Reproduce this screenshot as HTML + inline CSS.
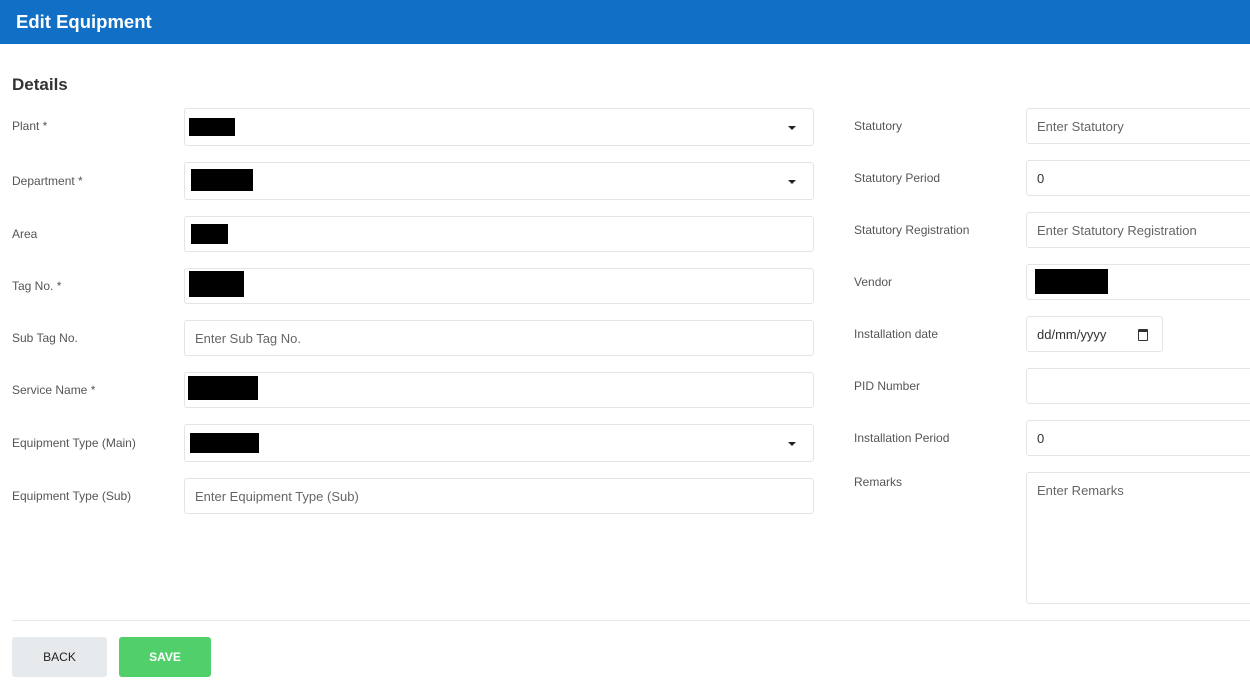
<!DOCTYPE html>
<html><head><style>
body{margin:0;width:1250px;height:693px;overflow:hidden;background:#fff;font-family:"Liberation Sans",sans-serif;position:relative}
.hd{position:absolute;left:0;top:0;width:1250px;height:44px;background:#1170c6;color:#fff;font-size:18.5px;font-weight:bold;line-height:44px;padding-left:16px;box-sizing:border-box}
.l{position:absolute;font-size:12px;color:#555}
.i{position:absolute;border:1px solid #e2e4e6;border-radius:3px;box-sizing:border-box;font-size:13px;color:#666;padding-left:10px;display:flex;align-items:center}
.b{position:absolute;background:#000}
.c{position:absolute;width:0;height:0;border-left:4px solid transparent;border-right:4px solid transparent;border-top:4px solid #222}
</style></head><body>
<div class="hd">Edit Equipment</div>
<div style="position:absolute;left:12px;top:75px;font-size:17px;font-weight:bold;color:#333">Details</div>

<div class="l" style="left:12px;top:119px">Plant *</div>
<div class="i" style="left:184px;top:108px;width:630px;height:38px"></div>
<div class="b" style="left:189px;top:118px;width:46px;height:18px"></div><div class="c" style="left:788px;top:126px"></div>

<div class="l" style="left:12px;top:174px">Department *</div>
<div class="i" style="left:184px;top:162px;width:630px;height:38px"></div>
<div class="b" style="left:191px;top:169px;width:62px;height:22px"></div><div class="c" style="left:788px;top:180px"></div>

<div class="l" style="left:12px;top:227px">Area</div>
<div class="i" style="left:184px;top:216px;width:630px;height:36px"></div>
<div class="b" style="left:191px;top:224px;width:37px;height:20px"></div>

<div class="l" style="left:12px;top:279px">Tag No. *</div>
<div class="i" style="left:184px;top:268px;width:630px;height:36px"></div>
<div class="b" style="left:189px;top:271px;width:55px;height:26px"></div>

<div class="l" style="left:12px;top:331px">Sub Tag No.</div>
<div class="i" style="left:184px;top:320px;width:630px;height:36px">Enter Sub Tag No.</div>

<div class="l" style="left:12px;top:383px">Service Name *</div>
<div class="i" style="left:184px;top:372px;width:630px;height:36px"></div>
<div class="b" style="left:188px;top:376px;width:70px;height:24px"></div>

<div class="l" style="left:12px;top:436px">Equipment Type (Main)</div>
<div class="i" style="left:184px;top:424px;width:630px;height:38px"></div>
<div class="b" style="left:190px;top:433px;width:69px;height:20px"></div><div class="c" style="left:788px;top:442px"></div>

<div class="l" style="left:12px;top:489px">Equipment Type (Sub)</div>
<div class="i" style="left:184px;top:478px;width:630px;height:36px">Enter Equipment Type (Sub)</div>

<div class="l" style="left:854px;top:119px">Statutory</div>
<div class="i" style="left:1026px;top:108px;width:240px;height:36px">Enter Statutory</div>
<div class="l" style="left:854px;top:171px">Statutory Period</div>
<div class="i" style="left:1026px;top:160px;width:240px;height:36px;color:#333">0</div>
<div class="l" style="left:854px;top:223px">Statutory Registration</div>
<div class="i" style="left:1026px;top:212px;width:240px;height:36px">Enter Statutory Registration</div>
<div class="l" style="left:854px;top:275px">Vendor</div>
<div class="i" style="left:1026px;top:264px;width:240px;height:36px"></div>
<div class="b" style="left:1035px;top:269px;width:73px;height:25px"></div>
<div class="l" style="left:854px;top:327px">Installation date</div>
<div class="i" style="left:1026px;top:316px;width:137px;height:36px;color:#333">dd/mm/yyyy
<div style="position:absolute;left:111px;top:12px;width:8px;height:8px;border:1.5px solid #333;border-top-width:3px;border-radius:1px"></div></div>
<div class="l" style="left:854px;top:379px">PID Number</div>
<div class="i" style="left:1026px;top:368px;width:240px;height:36px"></div>
<div class="l" style="left:854px;top:431px">Installation Period</div>
<div class="i" style="left:1026px;top:420px;width:240px;height:36px;color:#333">0</div>
<div class="l" style="left:854px;top:475px">Remarks</div>
<div class="i" style="left:1026px;top:472px;width:240px;height:132px;align-items:flex-start;padding-top:10px">Enter Remarks</div>

<div style="position:absolute;left:12px;top:620px;width:1238px;height:1px;background:#e6e8ea"></div>
<div style="position:absolute;left:12px;top:637px;width:95px;height:40px;background:#e7eaec;border-radius:3px;font-size:12px;color:#222;text-align:center;line-height:40px">BACK</div>
<div style="position:absolute;left:119px;top:637px;width:92px;height:40px;background:#51cf6b;border-radius:3px;font-size:12px;color:#fff;font-weight:bold;text-align:center;line-height:40px">SAVE</div>
</body></html>
